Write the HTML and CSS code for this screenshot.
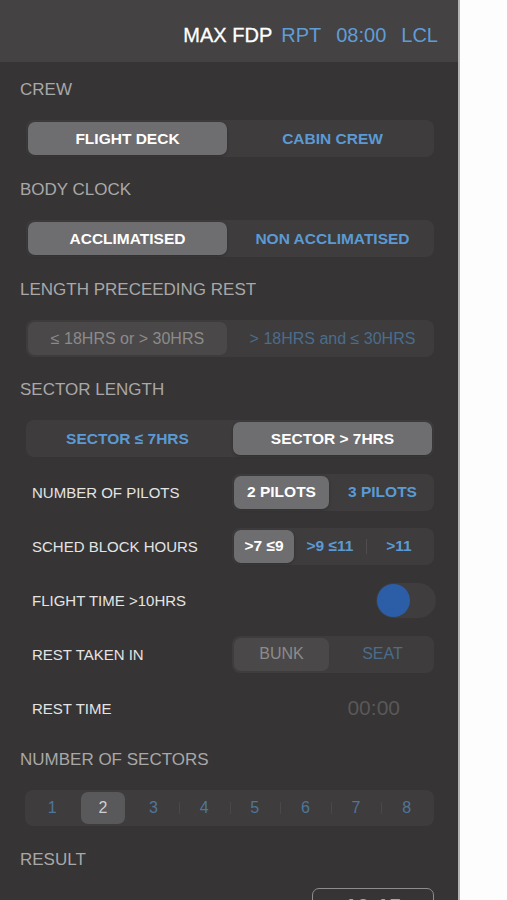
FILE: index.html
```html
<!DOCTYPE html>
<html lang="en">
<head>
<meta charset="utf-8">
<title>Max FDP</title>
<link rel="stylesheet" href="styles.css">
</head>
<body>
<div class="panel">
  <header class="topbar">
    <span class="title">MAX FDP</span>
    <span class="link first">RPT</span>
    <span class="link">08:00</span>
    <span class="link">LCL</span>
  </header>
  <main class="content">
    <section class="group first-group">
      <h2 class="label">CREW</h2>
      <div class="seg seg-wide">
        <span class="opt on">FLIGHT DECK</span>
        <span class="opt">CABIN CREW</span>
      </div>
    </section>
    <section class="group">
      <h2 class="label">BODY CLOCK</h2>
      <div class="seg seg-wide">
        <span class="opt on">ACCLIMATISED</span>
        <span class="opt">NON ACCLIMATISED</span>
      </div>
    </section>
    <section class="group">
      <h2 class="label">LENGTH PRECEEDING REST</h2>
      <div class="seg seg-wide disabled">
        <span class="opt on">≤ 18HRS or &gt; 30HRS</span>
        <span class="opt">&gt; 18HRS and ≤ 30HRS</span>
      </div>
    </section>
    <section class="group">
      <h2 class="label">SECTOR LENGTH</h2>
      <div class="seg seg-wide">
        <span class="opt">SECTOR ≤ 7HRS</span>
        <span class="opt on">SECTOR &gt; 7HRS</span>
      </div>
    </section>
    <section class="rows">
      <div class="row">
        <span class="row-label">NUMBER OF PILOTS</span>
        <div class="seg seg-small seg-two">
          <span class="opt on">2 PILOTS</span>
          <span class="opt">3 PILOTS</span>
        </div>
      </div>
      <div class="row">
        <span class="row-label">SCHED BLOCK HOURS</span>
        <div class="seg seg-small seg-three">
          <span class="opt on">&gt;7 ≤9</span>
          <span class="opt">&gt;9 ≤11</span>
          <span class="opt">&gt;11</span>
        </div>
      </div>
      <div class="row">
        <span class="row-label">FLIGHT TIME &gt;10HRS</span>
        <div class="toggle"><span class="knob"></span></div>
      </div>
      <div class="row">
        <span class="row-label">REST TAKEN IN</span>
        <div class="seg seg-small seg-two disabled">
          <span class="opt on">BUNK</span>
          <span class="opt">SEAT</span>
        </div>
      </div>
      <div class="row">
        <span class="row-label">REST TIME</span>
        <span class="time">00:00</span>
      </div>
    </section>
    <section class="group sectors-group">
      <h2 class="label">NUMBER OF SECTORS</h2>
      <div class="seg seg-sectors">
        <span class="opt">1</span>
        <span class="opt on">2</span>
        <span class="opt">3</span>
        <span class="opt">4</span>
        <span class="opt">5</span>
        <span class="opt">6</span>
        <span class="opt">7</span>
        <span class="opt">8</span>
      </div>
    </section>
    <section class="group result-group">
      <h2 class="label">RESULT</h2>
      <div class="result-box">10:15</div>
    </section>
  </main>
</div>
</body>
</html>
```

FILE: styles.css
```css
html, body {
  margin: 0;
  padding: 0;
  height: 900px;
  overflow: hidden;
  background: #fdfdfd;
}

body {
  font-family: "Liberation Sans", Arial, sans-serif;
}

.panel {
  width: 458px;
  height: 900px;
  background: #363434;
  border-right: 2px solid #b4b4b4;
  overflow: hidden;
}

.topbar {
  height: 62px;
  box-sizing: border-box;
  background: #444242;
  display: flex;
  justify-content: flex-end;
  align-items: flex-start;
  padding: 23px 20px 0 0;
  font-size: 20px;
  line-height: 24px;
}

.title {
  color: #ffffff;
  -webkit-text-stroke: 0.3px #ffffff;
}

.link {
  color: #5f9dd6;
  margin-left: 15px;
}

.link.first {
  margin-left: 9px;
}

.content {
  padding: 0 24px 0 20px;
}

.group {
  margin-top: 23px;
}

.first-group {
  margin-top: 18px;
}

.label {
  margin: 0 0 20px 0;
  font-size: 17px;
  line-height: 20px;
  font-weight: normal;
  color: #a9a8a8;
}

.seg {
  display: grid;
  grid-auto-flow: column;
  grid-auto-columns: 1fr;
  column-gap: 6px;
  padding: 2px;
  height: 37px;
  box-sizing: border-box;
  background: #3e3c3d;
  border-radius: 8px;
}

.seg-wide {
  margin-left: 6px;
}

.opt {
  position: relative;
  display: flex;
  align-items: center;
  justify-content: center;
  border-radius: 7px;
  font-size: 15.5px;
  font-weight: bold;
  color: #5b9ad4;
  white-space: nowrap;
}

.opt.on {
  background: #6e6d70;
  color: #ffffff;
  box-shadow: 0 1px 3px rgba(0, 0, 0, 0.25);
}

.opt + .opt::before {
  content: "";
  position: absolute;
  left: 0;
  top: 9px;
  bottom: 9px;
  width: 1px;
  background: #4f4d4e;
}

.opt.on::before,
.opt.on + .opt::before {
  display: none;
}

.disabled .opt {
  color: #4b6d8b;
  font-weight: normal;
  font-size: 16px;
}

.disabled .opt.on {
  background: #4a4849;
  color: #8c8b8b;
  box-shadow: none;
}

.rows {
  margin-top: 8px;
}

.row {
  display: flex;
  align-items: center;
  justify-content: space-between;
  height: 54px;
  padding-left: 12px;
}

.row-label {
  font-size: 15px;
  color: #e4e4e4;
}

.seg-small {
  width: 202px;
  height: 37px;
}

.seg-two {
  grid-template-columns: 95px 1fr;
  column-gap: 4px;
}

.seg-three {
  grid-template-columns: 60px 72px 1fr;
  column-gap: 0;
}

.toggle {
  width: 60px;
  height: 35px;
  box-sizing: border-box;
  margin-right: -2px;
  background: #3f3d3e;
  border-radius: 18px;
  display: flex;
  align-items: center;
  padding: 0 1px;
}

.knob {
  width: 33px;
  height: 33px;
  border-radius: 50%;
  background: #2b5ea6;
}

.time {
  font-size: 21px;
  color: #5a5858;
  margin-right: 34px;
}

.sectors-group {
  margin-top: 15px;
}

.seg-sectors {
  margin-left: 5px;
  height: 36px;
  column-gap: 0;
}

.seg-sectors .opt {
  font-weight: normal;
  font-size: 16px;
  color: #4f769b;
}

.seg-sectors .opt.on {
  background: #59585b;
  color: #cfcfcf;
  box-shadow: none;
  margin: 0 3px;
}

.seg-sectors .opt + .opt::before {
  top: 10px;
  bottom: 10px;
  background: #4a4849;
}

.result-group {
  margin-top: 24px;
}

.result-group .label {
  margin-bottom: 18px;
}

.result-box {
  width: 122px;
  height: 44px;
  box-sizing: border-box;
  margin-left: auto;
  border: 1px solid #8e8d8d;
  border-radius: 7px;
  display: flex;
  justify-content: center;
  padding-top: 5px;
  font-size: 22px;
  font-weight: bold;
  color: #8cc63f;
}
```
